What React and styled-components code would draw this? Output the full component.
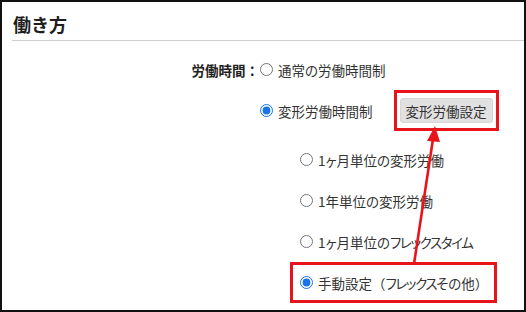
import React from "react";
import styled, { createGlobalStyle } from "styled-components";

const Global = createGlobalStyle`
  html, body { margin: 0; padding: 0; background: #fff; }
  body { font-family: "Noto Sans CJK JP", "Noto Sans", sans-serif; }
`;

const Frame = styled.div`
  position: relative;
  width: 526px;
  height: 312px;
  box-sizing: border-box;
  border: 2px solid #111;
  background: #fff;
  overflow: hidden;
`;

const Header = styled.div`
  margin-left: 10px;
  padding-top: 9px;
  padding-bottom: 3px;
  border-bottom: 1px solid #cfcfcf;
`;

const Title = styled.h2`
  margin: 0;
  font-size: 18px;
  line-height: 26px;
  font-weight: 700;
  color: #1e1e1e;
  padding-left: 1px;
`;

const Form = styled.div`
  display: grid;
  grid-template-columns: 258px 1fr;
  margin-top: 8px;
  color: #333;
  font-size: 13.5px;
  font-feature-settings: "palt";
`;

const Label = styled.div`
  height: 41px;
  display: flex;
  align-items: center;
  justify-content: flex-end;
  padding-right: 1px;
  font-size: 13.5px;
  font-weight: 700;
  font-feature-settings: normal;
  color: #222;
`;

const Options = styled.div`
  display: flex;
  flex-direction: column;
`;

const Row = styled.div`
  height: 41px;
  display: flex;
  align-items: center;
  box-sizing: border-box;
`;

const Radio = styled.input.attrs({ type: "radio" })`
  width: 13px;
  height: 13px;
  margin: 0 5px 0 0;
  accent-color: #1a73e8;
`;

const SubGroup = styled.div`
  display: flex;
  flex-direction: column;
  margin-top: 8px;
  padding-left: 30px;
`;

const SubRow = styled.label`
  height: 41px;
  display: flex;
  align-items: center;
  align-self: flex-start;
  box-sizing: border-box;
  padding: 0 6px 0 7px;
  border: 3px solid ${(p) => (p.$marked ? "#e8141b" : "transparent")};
`;

const Kana = styled.span`
  letter-spacing: -1.4px;
`;

const Paren = styled.span`
  font-feature-settings: normal;
`;

const Marker = styled.div`
  margin-left: 21px;
  height: 41px;
  box-sizing: border-box;
  padding: 0 3px;
  display: flex;
  align-items: center;
  border: 3px solid #e8141b;
`;

const Button = styled.button`
  font-family: inherit;
  font-size: 13.5px;
  font-feature-settings: "palt";
  color: #333;
  background: #e1e1e1;
  border: 1px solid #d6d6d6;
  border-radius: 3px;
  height: 25px;
  padding: 0 5px;
`;

const Arrow = styled.svg`
  position: absolute;
  left: -2px;
  top: -2px;
  width: 526px;
  height: 312px;
  pointer-events: none;
`;

export default function App() {
  return (
    <>
      <Global />
      <Frame>
        <Header>
          <Title>働き方</Title>
        </Header>
        <Form>
          <Label>労働時間：</Label>
          <Options>
            <Row>
              <Radio name="w" />
              <span>通常の労働時間制</span>
            </Row>
            <Row>
              <Radio name="w" defaultChecked />
              <span>変形労働時間制</span>
              <Marker>
                <Button>変形労働設定</Button>
              </Marker>
            </Row>
            <SubGroup>
              <SubRow>
                <Radio name="s" />
                <span>1ヶ月単位の変形労働</span>
              </SubRow>
              <SubRow>
                <Radio name="s" />
                <span>1年単位の変形労働</span>
              </SubRow>
              <SubRow>
                <Radio name="s" />
                <span>
                  1ヶ月単位の<Kana>フレックスタイム</Kana>
                </span>
              </SubRow>
              <SubRow $marked>
                <Radio name="s" defaultChecked />
                <span>
                  手動設定<Paren>（</Paren>
                  <Kana>フレックス</Kana>その他<Paren>）</Paren>
                </span>
              </SubRow>
            </SubGroup>
          </Options>
        </Form>
        <Arrow viewBox="0 0 526 312">
          <line x1="414" y1="264" x2="433" y2="139" stroke="#e8141b" strokeWidth="2.6" />
          <polygon points="435,126 427,141 440,142" fill="#e8141b" />
        </Arrow>
      </Frame>
    </>
  );
}
